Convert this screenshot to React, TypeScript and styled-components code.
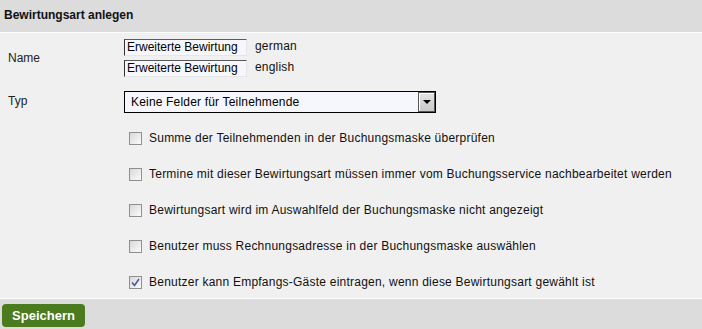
import styled, { createGlobalStyle } from "styled-components";

const GlobalStyle = createGlobalStyle`
  html, body {
    margin: 0;
    padding: 0;
    background: #f0f0f0;
  }
  body {
    font-family: "Liberation Sans", Arial, sans-serif;
    font-size: 12px;
    color: #111;
  }
`;

const Panel = styled.form`
  width: 702px;
  height: 329px;
  display: flex;
  flex-direction: column;
  background: #f0f0f0;
`;

const PanelHeader = styled.div`
  box-sizing: border-box;
  height: 34px;
  border-bottom: 1px solid #fff;
  background: #dcdcdc;
  padding: 0 4px 2px;
  display: flex;
  align-items: center;
  font-weight: 700;
  font-size: 12px;
  color: #111;
`;

const FormGrid = styled.div`
  flex: 1;
  display: grid;
  grid-template-columns: 116px 1fr;
  padding: 6px 0 0 8px;
`;

const Label = styled.div<{ $top?: boolean }>`
  align-self: ${(p) => (p.$top ? "start" : "center")};
  padding-top: ${(p) => (p.$top ? "3px" : "0")};
  margin-top: ${(p) => (p.$top ? "14px" : "0")};
  color: #222;
`;

const InputStack = styled.div`
  display: flex;
  flex-direction: column;
  gap: 4px;
`;

const InputRow = styled.div`
  display: flex;
  align-items: center;
  gap: 8px;
`;

const TextInput = styled.input`
  box-sizing: border-box;
  width: 123px;
  height: 17px;
  margin: 0;
  padding: 0 2px;
  border: 1px solid;
  border-color: #5a5a5a #e6e6e6 #e6e6e6 #333;
  background: #f5f7fc;
  font-family: "Liberation Sans", Arial, sans-serif;
  font-size: 12px;
  color: #000;
  outline: none;
`;

const LangTag = styled.span`
  color: #111;
  margin-top: -3px;
  letter-spacing: 0.2px;
`;

const SelectBox = styled.div`
  margin-top: 14px;
  box-sizing: border-box;
  width: 312px;
  height: 22px;
  border: 1px solid #000;
  background: #f5f7fc;
  display: flex;
  align-items: center;
  justify-content: space-between;
  padding-left: 6px;
  color: #000;
  letter-spacing: 0.18px;
`;

const DropButton = styled.span`
  box-sizing: border-box;
  width: 17px;
  height: 20px;
  border: 1px solid #555;
  box-shadow: inset 1px 1px 0 #fff;
  background: linear-gradient(#e4e4e4, #c9c9c9);
  display: flex;
  align-items: center;
  justify-content: center;
`;

const Arrow = styled.span`
  width: 0;
  height: 0;
  border-left: 4px solid transparent;
  border-right: 4px solid transparent;
  border-top: 4px solid #000;
  margin-top: 1px;
`;

const CheckList = styled.div`
  grid-column: 2;
  display: flex;
  flex-direction: column;
  gap: 23px;
  margin: 19px 0 9px 5px;
`;

const CheckRow = styled.label`
  display: flex;
  align-items: center;
  gap: 7px;
  height: 13px;
  color: #111;
  letter-spacing: 0.23px;
  white-space: nowrap;
`;

const Box = styled.span`
  box-sizing: border-box;
  flex: none;
  width: 13px;
  height: 13px;
  border: 1px solid #8e8f8f;
  background: linear-gradient(135deg, #d8d8d8, #fbfbfb);
  display: flex;
  align-items: center;
  justify-content: center;
`;

const PanelFooter = styled.div`
  height: 32px;
  border-top: 1px solid #fff;
  background: #dcdcdc;
  padding: 5px 0 0 2px;
  box-sizing: border-box;
`;

const SaveButton = styled.button`
  width: 83px;
  height: 23px;
  border: none;
  border-radius: 4px;
  background: #4a7b1e;
  color: #fff;
  font-family: "Liberation Sans", Arial, sans-serif;
  font-weight: 700;
  font-size: 13px;
  padding: 0;
  cursor: pointer;
`;

const options = [
  { text: "Summe der Teilnehmenden in der Buchungsmaske überprüfen", checked: false },
  { text: "Termine mit dieser Bewirtungsart müssen immer vom Buchungsservice nachbearbeitet werden", checked: false },
  { text: "Bewirtungsart wird im Auswahlfeld der Buchungsmaske nicht angezeigt", checked: false },
  { text: "Benutzer muss Rechnungsadresse in der Buchungsmaske auswählen", checked: false },
  { text: "Benutzer kann Empfangs-Gäste eintragen, wenn diese Bewirtungsart gewählt ist", checked: true },
];

const App = () => {
  return (
    <>
      <GlobalStyle />
      <Panel onSubmit={(e) => e.preventDefault()}>
        <PanelHeader>Bewirtungsart anlegen</PanelHeader>
        <FormGrid>
          <Label>Name</Label>
          <InputStack>
            <InputRow>
              <TextInput defaultValue="Erweiterte Bewirtung" />
              <LangTag>german</LangTag>
            </InputRow>
            <InputRow>
              <TextInput defaultValue="Erweiterte Bewirtung" />
              <LangTag>english</LangTag>
            </InputRow>
          </InputStack>

          <Label $top>Typ</Label>
          <SelectBox>
            Keine Felder für Teilnehmende
            <DropButton>
              <Arrow />
            </DropButton>
          </SelectBox>

          <CheckList>
            {options.map((o) => (
              <CheckRow key={o.text}>
                <Box>
                  {o.checked && (
                    <svg width="9" height="9" viewBox="0 0 9 9">
                      <path d="M1 4.5 L3.5 7.5 L8 1" fill="none" stroke="#4b5b9c" strokeWidth="1.6" />
                    </svg>
                  )}
                </Box>
                {o.text}
              </CheckRow>
            ))}
          </CheckList>
        </FormGrid>
        <PanelFooter>
          <SaveButton type="submit">Speichern</SaveButton>
        </PanelFooter>
      </Panel>
    </>
  );
};

export default App;
